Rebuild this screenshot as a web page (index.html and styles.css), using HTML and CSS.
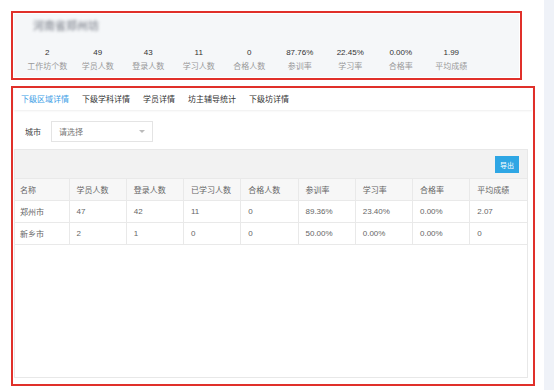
FILE: index.html
```html
<!DOCTYPE html>
<html lang="zh-CN">
<head>
    <meta charset="UTF-8">
    <meta name="viewport" content="width=device-width, initial-scale=1.0">
    <link rel="stylesheet" href="styles.css">
</head>
<body>

<div class="page">
    <div class="main">
        <!-- summary -->
        <div class="mark mark-top">
            <div class="summary">
                <div class="summary-title"><span class="blur">河南省郑州坊</span></div>
                <div class="stats">
                    <div class="stat"><span class="num">2</span><span class="label">工作坊个数</span></div>
                    <div class="stat"><span class="num">49</span><span class="label">学员人数</span></div>
                    <div class="stat"><span class="num">43</span><span class="label">登录人数</span></div>
                    <div class="stat"><span class="num">11</span><span class="label">学习人数</span></div>
                    <div class="stat"><span class="num">0</span><span class="label">合格人数</span></div>
                    <div class="stat"><span class="num">87.76%</span><span class="label">参训率</span></div>
                    <div class="stat"><span class="num">22.45%</span><span class="label">学习率</span></div>
                    <div class="stat"><span class="num">0.00%</span><span class="label">合格率</span></div>
                    <div class="stat"><span class="num">1.99</span><span class="label">平均成绩</span></div>
                </div>
            </div>
        </div>

        <!-- details -->
        <div class="mark mark-bottom">
            <div class="tabs">
                <span class="tab active">下级区域详情</span>
                <span class="tab">下级学科详情</span>
                <span class="tab">学员详情</span>
                <span class="tab">坊主辅导统计</span>
                <span class="tab">下级坊详情</span>
            </div>

            <div class="filter">
                <span class="filter-label">城市</span>
                <div class="select">
                    <span>请选择</span>
                    <span class="caret"></span>
                </div>
            </div>

            <div class="grid-card">
                <div class="toolbar">
                    <button class="btn-export">导出</button>
                </div>
                <table class="data">
                    <thead>
                        <tr>
                            <th class="c-name">名称</th>
                            <th>学员人数</th>
                            <th>登录人数</th>
                            <th>已学习人数</th>
                            <th>合格人数</th>
                            <th>参训率</th>
                            <th>学习率</th>
                            <th>合格率</th>
                            <th>平均成绩</th>
                        </tr>
                    </thead>
                    <tbody>
                        <tr>
                            <td class="c-name">郑州市</td>
                            <td>47</td>
                            <td>42</td>
                            <td>11</td>
                            <td>0</td>
                            <td>89.36%</td>
                            <td>23.40%</td>
                            <td>0.00%</td>
                            <td>2.07</td>
                        </tr>
                        <tr>
                            <td class="c-name">新乡市</td>
                            <td>2</td>
                            <td>1</td>
                            <td>0</td>
                            <td>0</td>
                            <td>50.00%</td>
                            <td>0.00%</td>
                            <td>0.00%</td>
                            <td>0</td>
                        </tr>
                    </tbody>
                </table>
            </div>
        </div>
    </div>
    <div class="side"></div>
</div>

</body>
</html>
```

FILE: styles.css
```css
body {
    margin: 0;
    padding: 0;
    font-family: "Liberation Sans", "Noto Sans CJK SC", sans-serif;
    font-size: 8px;
    color: #555;
    background: #fff;
    overflow: hidden;
}

.page {
    display: flex;
    height: 390px;
}

.main {
    width: 544px;
    padding: 11px 0 0 11px;
    box-sizing: border-box;
}

.side {
    flex: 1;
    background-color: #eff2f8;
}

/* red annotation frames */
.mark {
    border: 2px solid #e0302a;
    box-sizing: border-box;
}

.mark-top {
    width: 511px;
    height: 69px;
    padding: 1px;
}

.mark-bottom {
    width: 524px;
    height: 300px;
    margin-top: 6px;
    padding: 0 0 0 1px;
    display: flex;
    flex-direction: column;
}

/* summary */
.summary {
    height: 100%;
    background-color: #f5f7f9;
    padding: 5px 0 0 8px;
    box-sizing: border-box;
}

.summary-title {
    height: 20px;
    padding-left: 11px;
}

.blur {
    display: inline-block;
    font-size: 11px;
    font-weight: bold;
    color: #9a9ea6;
    filter: blur(1.4px);
    line-height: 15px;
}

.stats {
    display: flex;
    margin-top: 9px;
}

.stat {
    width: 50.5px;
    display: flex;
    flex-direction: column;
    align-items: center;
    row-gap: 5px;
}

.num {
    color: #333;
    line-height: 9px;
}

.label {
    color: #999;
    line-height: 9px;
}

/* tabs */
.tabs {
    display: flex;
    height: 22px;
    align-items: center;
    padding: 0 0 2px 0.5px;
    box-sizing: border-box;
    margin-right: 1px;
    background: #fff;
    box-shadow: 0 1px 2px rgba(0, 0, 0, 0.07);
    color: #333;
}

.tab {
    padding: 0 6.5px;
}

.tab.active {
    color: #3d9ee6;
}

/* filter */
.filter {
    display: flex;
    align-items: center;
    height: 38px;
    padding: 4px 0 0 11px;
    box-sizing: border-box;
    align-self: flex-start;
}

.filter-label {
    color: #444;
    width: 26px;
}

.select {
    width: 102px;
    height: 21px;
    border: 1px solid #e4e4e4;
    box-sizing: border-box;
    display: flex;
    align-items: center;
    justify-content: space-between;
    padding: 0 7px;
    color: #777;
}

.caret {
    width: 0;
    height: 0;
    border-left: 3px solid transparent;
    border-right: 3px solid transparent;
    border-top: 3px solid #bbb;
}

/* table card */
.grid-card {
    width: 514px;
    height: 229px;
    margin-top: 1px;
    border: 1px solid #e8e8e8;
    box-sizing: border-box;
}

.toolbar {
    height: 28px;
    background-color: #f2f2f2;
    display: flex;
    justify-content: flex-end;
    align-items: flex-start;
    padding: 6px 8px 0 0;
    box-sizing: border-box;
}

.btn-export {
    width: 24px;
    height: 17px;
    border: none;
    padding: 0;
    background-color: #2ea6e4;
    color: #fff;
    font-family: inherit;
    font-size: 7px;
    cursor: pointer;
}

.data {
    width: 100%;
    border-collapse: collapse;
    table-layout: fixed;
    color: #666;
}

.data th,
.data td {
    height: 22px;
    padding: 0 7px;
    text-align: left;
    font-weight: normal;
    border: 1px solid #e9e9e9;
    box-sizing: border-box;
}

.data th {
    background-color: #f7f7f7;
}

.data tr > :first-child {
    border-left: none;
}

.data tr > :last-child {
    border-right: none;
}

.data .c-name {
    width: 54px;
    padding-left: 5px;
}
```
